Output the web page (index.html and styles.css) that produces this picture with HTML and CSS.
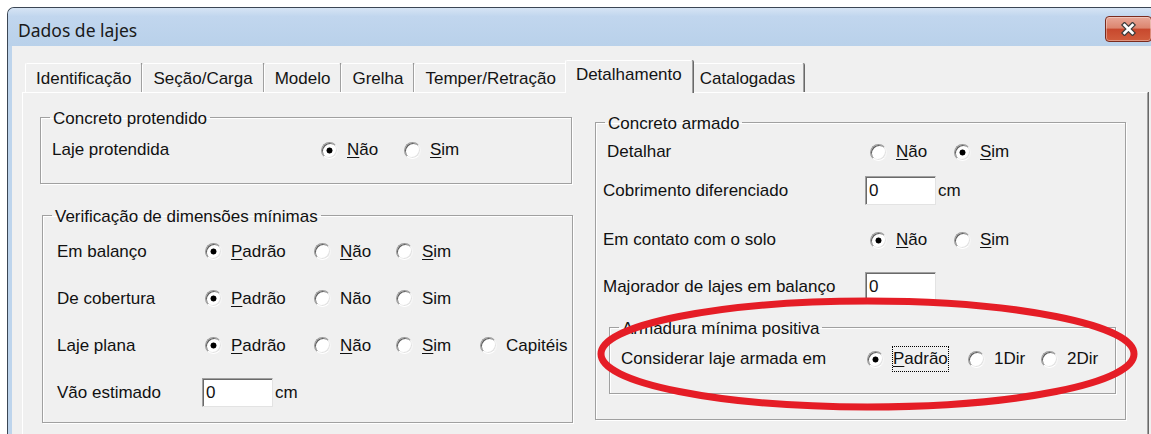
FILE: index.html
```html
<!DOCTYPE html>
<html lang="pt-BR">
<head>
<meta charset="utf-8">
<title>Dados de lajes</title>
<link rel="stylesheet" href="styles.css">
</head>
<body>
<div class="window">
  <div class="titlebar">
    <span class="title">Dados de lajes</span>
    <button class="close" type="button" aria-label="Fechar">
      <svg width="17" height="14" viewBox="0 0 17 14">
        <path d="M4.5 3 L12.5 11 M12.5 3 L4.5 11" stroke="#3c3c3c" stroke-width="5" stroke-linecap="square" fill="none"/>
        <path d="M4.5 3 L12.5 11 M12.5 3 L4.5 11" stroke="#fff" stroke-width="2.6" stroke-linecap="square" fill="none"/>
      </svg>
    </button>
  </div>
  <div class="client">
    <div class="tabs">
      <div class="tab">Identificação</div>
      <div class="tab">Seção/Carga</div>
      <div class="tab">Modelo</div>
      <div class="tab">Grelha</div>
      <div class="tab">Temper/Retração</div>
      <div class="tab active">Detalhamento</div>
      <div class="tab">Catalogadas</div>
    </div>
    <div class="panel">
      <div class="col col-left">
        <fieldset class="group g-prot">
          <legend>Concreto protendido</legend>
          <div class="row r-prot">
            <span class="lbl">Laje protendida</span>
            <span class="opt w83"><span class="rb on"></span><span class="txt"><u>N</u>ão</span></span>
            <span class="opt"><span class="rb"></span><span class="txt"><u>S</u>im</span></span>
          </div>
        </fieldset>

        <fieldset class="group g-dim">
          <legend>Verificação de dimensões mínimas</legend>
          <div class="row r-dim">
            <span class="lbl">Em balanço</span>
            <span class="opts">
              <span class="opt w109"><span class="rb on"></span><span class="txt"><u>P</u>adrão</span></span>
              <span class="opt w82"><span class="rb"></span><span class="txt"><u>N</u>ão</span></span>
              <span class="opt"><span class="rb"></span><span class="txt"><u>S</u>im</span></span>
            </span>
          </div>
          <div class="row r-dim">
            <span class="lbl">De cobertura</span>
            <span class="opts">
              <span class="opt w109"><span class="rb on"></span><span class="txt"><u>P</u>adrão</span></span>
              <span class="opt w82"><span class="rb"></span><span class="txt">Não</span></span>
              <span class="opt"><span class="rb"></span><span class="txt">Sim</span></span>
            </span>
          </div>
          <div class="row r-dim">
            <span class="lbl">Laje plana</span>
            <span class="opts">
              <span class="opt w109"><span class="rb on"></span><span class="txt"><u>P</u>adrão</span></span>
              <span class="opt w82"><span class="rb"></span><span class="txt"><u>N</u>ão</span></span>
              <span class="opt w84"><span class="rb"></span><span class="txt"><u>S</u>im</span></span>
              <span class="opt"><span class="rb"></span><span class="txt">Capitéis</span></span>
            </span>
          </div>
          <div class="row r-dim">
            <span class="lbl">Vão estimado</span>
            <span class="field">0</span>
            <span class="unit">cm</span>
          </div>
        </fieldset>
      </div>

      <div class="col col-right">
        <fieldset class="group g-arm">
          <legend>Concreto armado</legend>
          <div class="row r-det">
            <span class="lbl">Detalhar</span>
            <span class="opts">
              <span class="opt w84"><span class="rb"></span><span class="txt"><u>N</u>ão</span></span>
              <span class="opt"><span class="rb on"></span><span class="txt"><u>S</u>im</span></span>
            </span>
          </div>
          <div class="row r-cob">
            <span class="lbl">Cobrimento diferenciado</span>
            <span class="field">0</span>
            <span class="unit">cm</span>
          </div>
          <div class="row r-solo">
            <span class="lbl">Em contato com o solo</span>
            <span class="opts">
              <span class="opt w84"><span class="rb on"></span><span class="txt"><u>N</u>ão</span></span>
              <span class="opt"><span class="rb"></span><span class="txt"><u>S</u>im</span></span>
            </span>
          </div>
          <div class="row r-maj">
            <span class="lbl">Majorador de lajes em balanço</span>
            <span class="field">0</span>
          </div>

          <fieldset class="group g-min">
            <legend>Armadura mínima positiva</legend>
            <div class="row r-cons">
              <span class="lbl">Considerar laje armada em</span>
              <span class="opt w101"><span class="rb on"></span><span class="txt focus"><u>P</u>adrão</span></span>
              <span class="opt w73"><span class="rb"></span><span class="txt">1Dir</span></span>
              <span class="opt"><span class="rb"></span><span class="txt">2Dir</span></span>
            </div>
          </fieldset>
        </fieldset>
      </div>

      <svg class="mark" width="1125" height="340" viewBox="0 0 1125 340" aria-hidden="true">
        <ellipse cx="844.5" cy="261" rx="266.5" ry="53" fill="none" stroke="#e51d26" stroke-width="7"/>
      </svg>
    </div>
  </div>
</div>
</body>
</html>
```

FILE: styles.css
```css
* {
  box-sizing: border-box;
}

html,
body {
  margin: 0;
  padding: 0;
  overflow: hidden;
}

body {
  width: 1151px;
  height: 434px;
  background: #fff;
  font-family: "Liberation Sans", Arial, sans-serif;
  font-size: 17px;
  color: #111;
}

u {
  text-decoration: underline;
  text-underline-offset: 2px;
}

/* window frame */
.window {
  margin: 7px 0 0 7px;
  width: 1160px;
  border-top: 1px solid #3b4654;
  border-left: 1px solid #3b4654;
  border-top-left-radius: 7px;
  background: #bdd4ec;
}

.titlebar {
  height: 38px;
  display: flex;
  align-items: flex-start;
  border-top-left-radius: 6px;
  background: linear-gradient(#d6e4f4, #c1d6ee 22%, #b9d1ea);
}

.title {
  margin: 12px 0 0 10px;
  font-family: "Noto Sans", "Liberation Sans", sans-serif;
  font-size: 17.5px;
  line-height: 20px;
  color: #1a1a1a;
}

.close {
  width: 47px;
  height: 26px;
  margin: 8px 15px 0 auto;
  padding: 0;
  display: flex;
  align-items: center;
  justify-content: center;
  border: 1px solid #7b2b1d;
  border-radius: 4px;
  background: linear-gradient(#e8a797 0%, #dc8670 45%, #c8492e 52%, #d15d3d 100%);
  box-shadow: inset 0 0 0 1px rgba(255, 255, 255, 0.35);
}

/* client area */
.client {
  margin-left: 4px;
  height: 388px;
  padding: 14px 0 0 10px;
  background: #f0f0f0;
}

.tabs {
  display: flex;
  height: 32px;
  padding-left: 3px;
  position: relative;
  z-index: 1;
}

.tab {
  margin-top: 3px;
  height: 29px;
  padding: 5px 10px 0;
  line-height: 20px;
  white-space: nowrap;
  color: #141414;
  background: #f0f0f0;
  border-top: 1px solid #fff;
  border-left: 1px solid #fff;
  border-right: 1px solid #a0a0a0;
  border-radius: 2px 2px 0 0;
  box-shadow: 1px 0 0 #696969;
}

.tab:last-child {
  padding: 5px 8px 0;
}

.tab.active {
  margin: 0 -2px 0;
  height: 33px;
  padding-top: 4px;
  position: relative;
  z-index: 2;
}

.panel {
  position: relative;
  width: 1126px;
  height: 360px;
  display: flex;
  align-items: flex-start;
  gap: 22px;
  padding: 0 0 0 17px;
  background: #f0f0f0;
  border-top: 1px solid #fff;
  border-left: 1px solid #fff;
  border-right: 1px solid #a0a0a0;
  box-shadow: 1px 0 0 #696969;
}

.col-left {
  margin-top: 12px;
  width: 533px;
}

.col-right {
  margin-top: 17px;
}

/* group boxes */
.group {
  margin: 0;
  padding: 0;
  min-width: 0;
  border: 1px solid #a0a0a0;
  box-shadow: inset 1px 1px 0 #fff, 1px 1px 0 #fff;
}

.group legend {
  margin-left: 9px;
  padding: 4px 3px 0;
  line-height: 20px;
  color: #111;
}

.g-prot {
  width: 532px;
  padding-bottom: 23px;
}

.g-dim {
  width: 531px;
  margin: 19px 0 0 2px;
  padding: 1px 0 6px;
}

.g-arm {
  width: 531px;
  padding-bottom: 25px;
}

.g-min {
  width: 507px;
  margin: 14px 0 0 13px;
  padding-bottom: 21px;
}

/* rows */
.row {
  display: flex;
  align-items: center;
  white-space: nowrap;
}

.lbl {
  flex: none;
}

.r-prot {
  margin-top: 11px;
  height: 20px;
}

.r-prot .lbl {
  width: 280px;
  padding-left: 11px;
}

.r-dim {
  height: 47px;
}

.r-dim .lbl {
  width: 159px;
  padding-left: 14px;
}

.r-dim .opts {
  margin-left: 3px;
}

.r-det,
.r-solo {
  height: 20px;
}

.r-det {
  margin-top: 8px;
}

.r-det .lbl {
  width: 269px;
  padding-left: 11px;
}

.r-cob {
  margin-top: 14px;
  height: 29px;
}

.r-solo {
  margin-top: 25px;
}

.r-maj {
  margin-top: 22px;
  height: 29px;
}

.r-cob .lbl,
.r-solo .lbl,
.r-maj .lbl {
  width: 269px;
  padding-left: 7px;
}

.r-det .opts,
.r-solo .opts {
  margin-left: 5px;
}

.r-cons {
  margin-top: 7px;
  height: 26px;
}

.r-cons .lbl {
  width: 257px;
  padding-left: 11px;
}

/* radio options */
.opts {
  display: flex;
}

.opt {
  display: flex;
  align-items: center;
  flex: none;
}

.w73 { width: 73px; }
.w82 { width: 82px; }
.w83 { width: 83px; }
.w84 { width: 84px; }
.w101 { width: 101px; }
.w109 { width: 109px; }

.rb {
  flex: none;
  width: 17px;
  height: 17px;
  margin-right: 9px;
  border-radius: 50%;
  background: #fff;
  border: 1px solid;
  border-color: #9a9a9a #f6f6f6 #fff #9a9a9a;
  box-shadow: inset 1px 1px 0 #5e5e5e, inset -1px -1px 0 #e3e3e3;
}

.rb.on {
  background: radial-gradient(circle, #000 0 2.7px, #fff 3.3px);
}

.txt {
  line-height: 20px;
}

.txt.focus {
  margin-left: -1px;
  line-height: 24px;
  border: 1px dotted #000;
}

/* edit boxes */
.field {
  flex: none;
  width: 71px;
  height: 29px;
  padding-left: 3px;
  line-height: 27px;
  background: #fff;
  border: 1px solid;
  border-color: #a0a0a0 #e3e3e3 #e3e3e3 #a0a0a0;
  box-shadow: inset 1px 1px 0 #6a6a6a;
}

.unit {
  margin-left: 2px;
}

/* red annotation ring */
.mark {
  position: absolute;
  left: 0;
  top: 0;
  pointer-events: none;
}
```
